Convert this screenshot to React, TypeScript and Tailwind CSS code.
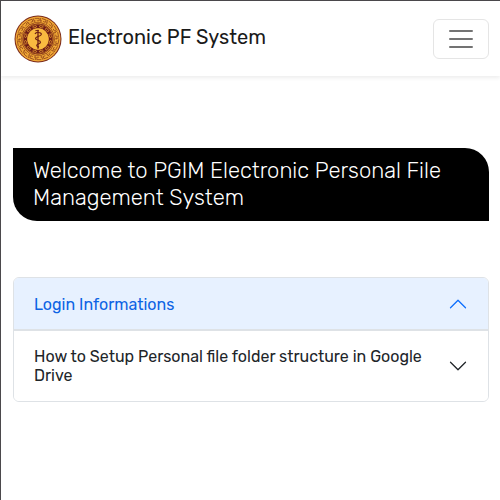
import { useState } from "react";

const font = "font-['Rubik','Roboto',sans-serif]";

const ringMarks = Array.from({ length: 18 }, (_, i) => i * 20);
const petals = Array.from({ length: 12 }, (_, i) => i * 30);

function Emblem() {
  return (
    <svg viewBox="-1 -1 50 50" className="size-[50px] shrink-0" aria-hidden="true">
      <circle cx="24" cy="24" r="23.5" fill="#7a2a1c" />
      <circle cx="24" cy="24" r="22.5" fill="#f0a836" />
      <g fill="none" stroke="#8f4218" strokeWidth="0.75">
        {ringMarks.map((angle) => (
          <path
            key={angle}
            transform={`rotate(${angle} 24 24)`}
            d="M20.6 3.4h4.6v2.4h-2.4M20.8 5.2v2.5h5.4M26.6 3v3.2"
          />
        ))}
      </g>
      <circle cx="24" cy="24" r="15.2" fill="#f0a836" stroke="#7f2c18" strokeWidth="0.9" />
      <circle cx="24" cy="24" r="12.6" fill="none" stroke="#6e1d17" strokeWidth="3.8" />
      <g fill="none" stroke="#d98c2b" strokeWidth="0.8">
        {petals.map((angle) => (
          <ellipse key={angle} cx="24" cy="11.3" rx="2" ry="1" transform={`rotate(${angle + 15} 24 24)`} />
        ))}
      </g>
      <circle cx="24" cy="24" r="10.6" fill="#f9ba40" />
      <path d="M24 14.8v19" stroke="#6e2015" strokeWidth="1.3" />
      <path d="M21.4 15.6h3.4" stroke="#6e2015" strokeWidth="1" />
      <path
        d="M21 19c1-2.2 6.5-2 6.3.5-.2 2.2-5.8 1.7-5.8 4 0 2.1 5 1.5 5 3.7 0 1.9-3.8 1.4-3.8 3.2 0 1 1.3 1.3 2.3 1.8"
        fill="none"
        stroke="#6e2015"
        strokeWidth="1.2"
      />
    </svg>
  );
}

function Chevron({ open }: { open: boolean }) {
  return (
    <svg viewBox="0 0 16 16" fill="currentColor" aria-hidden="true" className={open ? "ml-auto size-5 shrink-0 rotate-180 text-[#0d6efd]" : "ml-auto size-5 shrink-0 text-[#212529]"}>
      <path
        fillRule="evenodd"
        d="M1.646 4.646a.5.5 0 0 1 .708 0L8 10.293l5.646-5.647a.5.5 0 0 1 .708.708l-6 6a.5.5 0 0 1-.708 0l-6-6a.5.5 0 0 1 0-.708z"
      />
    </svg>
  );
}

const topics = ["Login Informations", "How to Setup Personal file folder structure in Google Drive"];

export default function App() {
  const [active, setActive] = useState(0);

  return (
    <div className={`min-h-screen border-t border-l border-[#4b494c] bg-white text-[#212529] ${font}`}>
      <header className="flex items-center justify-between pt-[13px] pr-[11px] pb-3 pl-3 shadow-[0_2px_4px_rgba(0,0,0,0.075)]">
        <a href="#" className="flex items-center gap-[5px] text-xl leading-[30px] text-[#1a1a1a]">
          <Emblem />
          <span className="pb-1">Electronic PF System</span>
        </a>
        <button type="button" aria-label="Toggle navigation" className="flex h-10 w-14 items-center justify-center rounded-md border border-[#e5e5e5]">
          <svg viewBox="0 0 30 30" className="size-[30px]" aria-hidden="true">
            <path d="M4 7h22M4 15h22M4 23h22" stroke="#000000" strokeOpacity="0.55" strokeWidth="2" strokeLinecap="round" />
          </svg>
        </button>
      </header>

      <main className="pt-[72px] pr-[11px] pl-3">
        <h1 className="rounded-tr-3xl rounded-bl-3xl bg-black px-5 pt-[9px] pb-2.5 text-[22px] leading-[27px] font-light text-white">
          Welcome to PGIM Electronic Personal File Management System
        </h1>

        <div className="mt-14 divide-y divide-[#dee2e6] overflow-hidden rounded-md border border-[#dee2e6]">
          {topics.map((topic, index) => (
            <h2 key={topic}>
              <button
                type="button"
                aria-expanded={active === index}
                onClick={() => setActive(active === index ? -1 : index)}
                className={
                  active === index
                    ? "flex w-full items-center bg-[#e7f1ff] px-5 py-4 text-left text-base leading-[19px] text-[#0c63e4] shadow-[inset_0_-1px_0_#dee2e6]"
                    : "flex w-full items-center bg-white px-5 py-4 text-left text-base leading-[19px] text-[#212529]"
                }
              >
                <span className="pr-5">{topic}</span>
                <Chevron open={active === index} />
              </button>
            </h2>
          ))}
        </div>
      </main>
    </div>
  );
}
